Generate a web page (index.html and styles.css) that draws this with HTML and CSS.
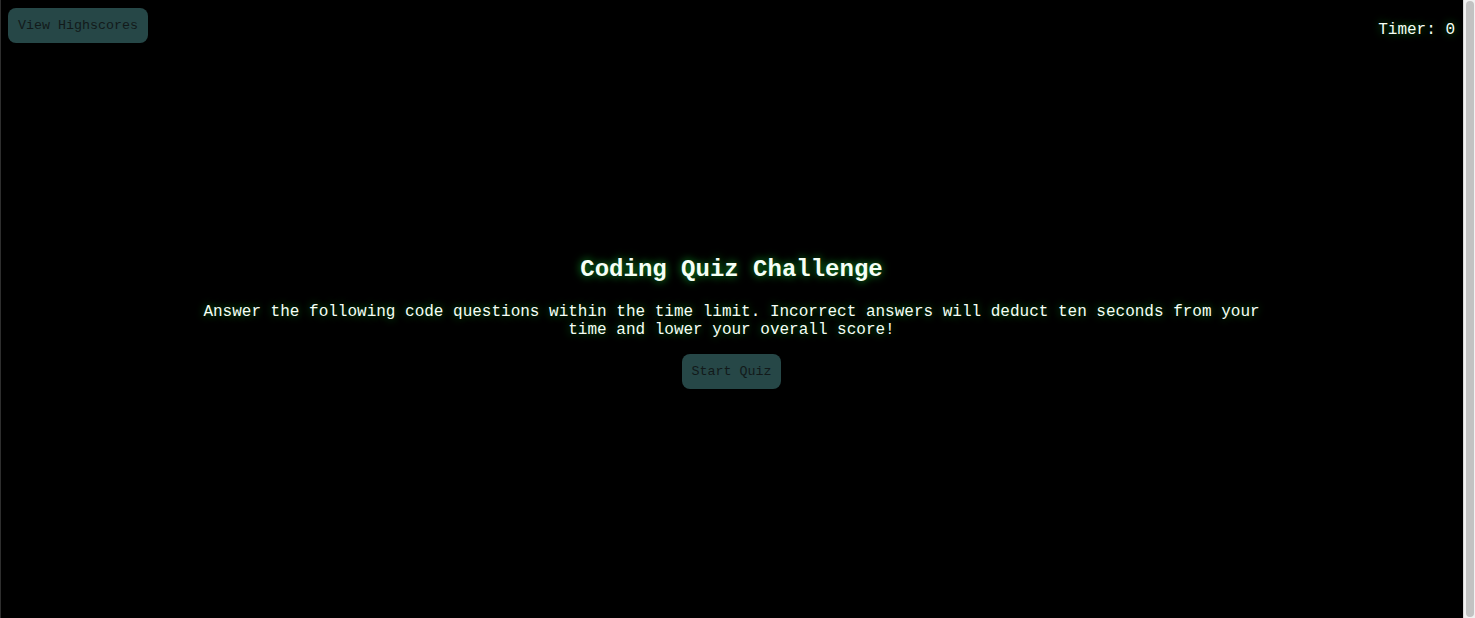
FILE: index.html
```html
<!DOCTYPE html>
<html lang="en">
<head>
<meta charset="utf-8">
<title>Coding Quiz Challenge</title>
<link rel="stylesheet" href="styles.css">
</head>
<body>
<div class="page">
  <header class="topbar">
    <button class="btn">View Highscores</button>
    <div class="timer">Timer: <span>0</span></div>
  </header>
  <main class="intro">
    <h1 class="title">Coding Quiz Challenge</h1>
    <p class="desc">Answer the following code questions within the time limit. Incorrect answers will deduct ten seconds from your time and lower your overall score!</p>
    <button class="btn">Start Quiz</button>
  </main>
</div>
<div class="scrollbar"><div class="thumb"></div></div>
</body>
</html>
```

FILE: styles.css
```css
html, body {
  margin: 0;
  padding: 0;
  height: 100%;
  overflow: hidden;
  background: #000;
}

body::before {
  content: "";
  position: fixed;
  left: 0;
  top: 0;
  bottom: 0;
  width: 1px;
  background: #2e2e2e;
}

.page {
  width: 1463px;
  box-sizing: border-box;
  padding: 8px;
  font-family: "Liberation Mono", "Courier New", monospace;
  color: #f6fff6;
}

.topbar {
  display: flex;
  justify-content: space-between;
  align-items: flex-start;
}

.btn {
  font-family: "Liberation Mono", "Courier New", monospace;
  font-size: 13.333px;
  line-height: 15px;
  color: #121a1a;
  background: #264747;
  border: none;
  border-radius: 8px;
  padding: 10px 10px;
  height: 35px;
  width: auto;
  cursor: pointer;
}

.timer {
  font-size: 16px;
  line-height: 18px;
  margin-top: 13px;
  text-shadow: 0 0 8px #0a7a18;
}

.intro {
  display: flex;
  flex-direction: column;
  align-items: center;
  text-align: center;
  padding-top: 213px;
}

.title {
  margin: 0;
  font-size: 24px;
  line-height: 28px;
  font-weight: bold;
  color: #f6fff6;
  text-shadow: 0 0 8px #12a828;
}

.desc {
  margin: 19px 0 15px;
  font-size: 16px;
  line-height: 18px;
  width: 1070px;
  text-shadow: 0 0 8px #0a7a18;
}

.scrollbar {
  position: fixed;
  top: 0;
  right: 0;
  bottom: 0;
  width: 12px;
  background: #f1f1f1;
  border-left: 1px solid #d8d8d8;
  box-sizing: border-box;
  display: flex;
  justify-content: flex-end;
  padding: 1px 1px 1px 0;
}

.thumb {
  width: 8px;
  height: 100%;
  background: #c2c2c2;
  border-radius: 4px;
}
```
